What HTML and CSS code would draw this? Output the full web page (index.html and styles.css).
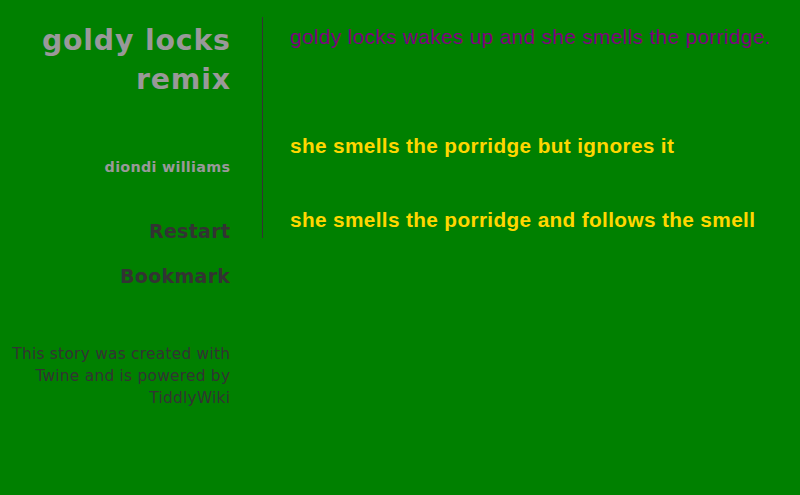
FILE: index.html
```html
<!DOCTYPE html>
<html>
<head>
<meta charset="utf-8">
<title>goldy locks remix</title>
<link rel="stylesheet" href="styles.css">
</head>
<body>
<div class="page">
  <aside class="sidebar">
    <h1 class="title">goldy locks remix</h1>
    <div class="author">diondi williams</div>
    <nav class="menu">
      <a class="menu-item" href="#">Restart</a>
      <a class="menu-item" href="#">Bookmark</a>
    </nav>
    <p class="credits">This story was created with Twine and is powered by TiddlyWiki</p>
  </aside>
  <main class="passages">
    <div class="passage">
      <p class="body-text">goldy locks wakes up and she smells the porridge.</p>
      <a class="choice first" href="#">she smells the porridge but ignores it</a>
      <a class="choice" href="#">she smells the porridge and follows the smell</a>
    </div>
  </main>
</div>
</body>
</html>
```
FILE: styles.css
```css
html, body {
  margin: 0;
  padding: 0;
  background: #008000;
}
body {
  font-family: "DejaVu Sans", Verdana, sans-serif;
  height: 495px;
  overflow: hidden;
}
.page {
  display: flex;
  align-items: flex-start;
}
.sidebar {
  width: 230px;
  text-align: right;
  flex: none;
}
.title {
  margin: 21px -0.8px 0 0;
  font-size: 28.4px;
  line-height: 39px;
  letter-spacing: 0.8px;
  font-weight: bold;
  color: #999999;
}
.author {
  margin: 57.7px -0.25px 0 0;
  font-size: 14.4px;
  line-height: 20px;
  letter-spacing: 0.25px;
  font-weight: bold;
  color: #999999;
}
.menu {
  display: flex;
  flex-direction: column;
  align-items: flex-end;
  margin: 42.4px -0.3px 0 0;
  gap: 21px;
}
.menu-item {
  font-size: 19px;
  line-height: 24px;
  letter-spacing: 0.3px;
  font-weight: bold;
  color: #333333;
  text-decoration: none;
}
.credits {
  margin: 56px -0.25px 0 0;
  font-size: 15.4px;
  line-height: 21.8px;
  letter-spacing: 0.25px;
  color: #333333;
}
.passages {
  margin-left: 32px;
  margin-top: 17px;
  border-left: 1px solid #333333;
  height: 221px;
  padding-left: 27px;
}
.passage {
  font-family: "Liberation Sans", Arial, sans-serif;
  font-size: 20.8px;
  line-height: 24px;
  letter-spacing: 0.35px;
  display: flex;
  flex-direction: column;
  align-items: flex-start;
}
.body-text {
  margin: 8px 0 0 0;
  color: #800080;
}
.choice {
  color: #ffd700;
  font-weight: bold;
  text-decoration: none;
  margin-top: 49.7px;
}
.choice.first {
  margin-top: 85.3px;
}
```
